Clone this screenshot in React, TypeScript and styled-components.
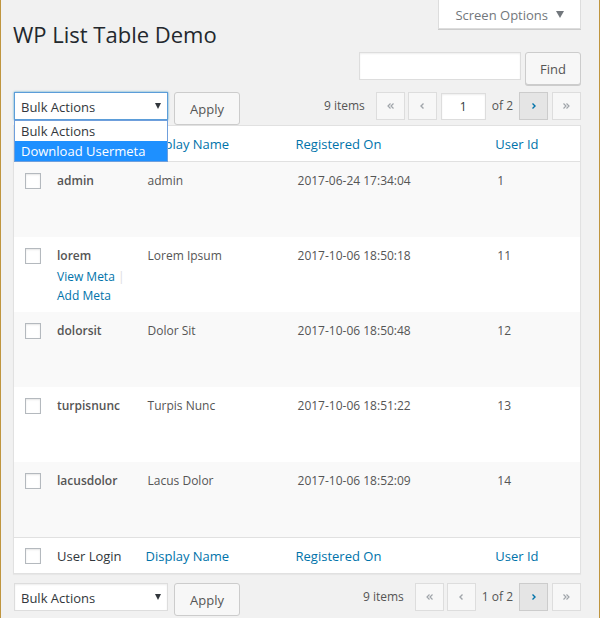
import React, { useState } from "react";
import styled, { createGlobalStyle, css } from "styled-components";

const GlobalStyle = createGlobalStyle`
  *, *::before, *::after { box-sizing: border-box; }
  body {
    margin: 0;
    background: #f1f1f1;
    color: #444;
    font-family: "Segoe UI", "Open Sans", "Noto Sans", sans-serif;
    font-size: 13px;
    line-height: 18px;
  }
  button, input, select { font: inherit; color: inherit; margin: 0; }
`;

const Page = styled.div`
  min-height: 100vh;
  padding: 0 18px 2px 12px;
  border: solid #bf953f;
  border-width: 0 1px;
`;

const Header = styled.header`
  display: flex;
  justify-content: space-between;
  align-items: flex-start;
  height: 52px;
`;

const Title = styled.h1`
  margin: 0;
  padding-top: 19px;
  font-size: 22px;
  font-weight: 400;
  line-height: 30px;
  color: #23282d;
`;

const ScreenOptions = styled.button`
  display: flex;
  align-items: center;
  gap: 8px;
  height: 29px;
  padding: 1px 16px 0;
  border: 1px solid #ddd;
  border-top: 0;
  background: #fff;
  box-shadow: 0 1px 0 #ccc;
  color: #72777c;
  white-space: nowrap;
`;

const SearchForm = styled.form`
  display: flex;
  justify-content: flex-end;
  align-items: flex-start;
  gap: 4px;
  margin-bottom: 7px;
`;

const fieldStyle = css`
  border: 1px solid #ddd;
  border-radius: 0;
  background: #fff;
  box-shadow: inset 0 1px 2px rgba(0, 0, 0, 0.07);
  color: #32373c;
  outline: 0;
`;

const SearchInput = styled.input`
  ${fieldStyle}
  width: 162px;
  height: 28px;
  padding: 3px 5px;
`;

const Button = styled.button`
  height: 33px;
  padding: 1px 14px 0;
  border: 1px solid #ccc;
  border-radius: 3px;
  background: #f7f7f7;
  box-shadow: 0 1px 0 #ccc;
  color: #555;
`;

const FlatButton = styled(Button)`
  padding: 1px 15px 0;
  box-shadow: none;
`;

const TableNav = styled.div<{ $below?: boolean }>`
  display: flex;
  justify-content: space-between;
  align-items: flex-start;
  margin-top: ${(p) => (p.$below ? 9 : 0)}px;
  padding-left: 1px;
`;

const BulkActions = styled.div`
  display: flex;
  align-items: flex-start;
  gap: 6px;
`;

const SelectBox = styled.div`
  position: relative;
  width: 154px;
`;

const Select = styled.select<{ $open?: boolean }>`
  ${fieldStyle}
  display: block;
  appearance: none;
  width: 100%;
  height: 28px;
  padding: 2px 20px 0 6px;
  ${(p) =>
    p.$open &&
    css`
      border-color: #5b9dd9;
      box-shadow: 0 0 2px rgba(30, 140, 190, 0.8);
    `}
`;

const SelectArrow = styled.svg`
  position: absolute;
  top: 11px;
  right: 7px;
  pointer-events: none;
`;

const OptionList = styled.ul`
  position: absolute;
  top: 28px;
  left: 0;
  right: 0;
  z-index: 1;
  margin: 0;
  padding: 0;
  border: 1px solid #6f9fdc;
  background: #fff;
  list-style: none;
`;

const OptionItem = styled.li<{ $active?: boolean }>`
  padding: 0 6px;
  line-height: 20px;
  white-space: nowrap;
  background: ${(p) => (p.$active ? "#1e90ff" : "#fff")};
  color: ${(p) => (p.$active ? "#fff" : "#32373c")};
`;

const Pagination = styled.nav`
  display: flex;
  align-items: center;
  gap: 4px;
  height: 28px;
  color: #555;
  font-size: 12px;
  white-space: nowrap;
`;

const ItemCount = styled.span`
  margin-right: 7px;
`;

const PageStatus = styled.span`
  padding: 0 2px;
`;

const PageInput = styled.input`
  ${fieldStyle}
  width: 45px;
  height: 27px;
  padding: 0;
  text-align: center;
`;

const PageButton = styled.button`
  display: flex;
  align-items: center;
  justify-content: center;
  width: 29px;
  height: 28px;
  padding: 0;
  border: 1px solid #ccc;
  background: #e5e5e5;
  color: #0073aa;
  &:disabled {
    border-color: #ddd;
    background: #f7f7f7;
    color: #a0a5aa;
  }
`;

const PageGroup = styled.div`
  display: flex;
  gap: 3px;
`;

const Table = styled.table`
  width: 100%;
  table-layout: fixed;
  border: 1px solid #e1e1e1;
  border-spacing: 0;
  background: #fff;
  box-shadow: 0 1px 1px rgba(0, 0, 0, 0.04);
`;

const Col = styled.col<{ $w?: string }>`
  width: ${(p) => p.$w ?? "auto"};
`;

const HeadCell = styled.th<{ $foot?: boolean }>`
  height: 36px;
  padding: 0 8px;
  border: solid #e1e1e1;
  border-width: ${(p) => (p.$foot ? "1px 0 0" : "0 0 1px")};
  color: #32373c;
  font-size: 13px;
  font-weight: 400;
  text-align: left;
  white-space: nowrap;
`;

const LoginHead = styled(HeadCell)`
  padding-left: 10px;
`;

const CheckHead = styled(HeadCell)`
  padding: 0 0 0 11px;
`;

const Row = styled.tr`
  height: 75px;
  &:nth-child(odd) {
    background: #f9f9f9;
  }
`;

const Cell = styled.td`
  padding: 10px 0 0 10px;
  vertical-align: top;
  color: #555;
  font-size: 12px;
`;

const CheckCell = styled.td`
  padding: 11px 0 0 11px;
  vertical-align: top;
`;

const Checkbox = styled.input`
  appearance: none;
  display: block;
  width: 16px;
  height: 16px;
  border: 1px solid #b4b9be;
  background: #fff;
  box-shadow: inset 0 1px 2px rgba(0, 0, 0, 0.1);
  &:checked {
    background: #0073aa;
  }
`;

const Login = styled.strong`
  display: block;
  font-weight: 600;
`;

const RowActions = styled.div`
  padding-top: 2px;
  font-size: 12px;
  line-height: 19px;
  color: #ddd;
`;

const Link = styled.a`
  color: #0073aa;
  text-decoration: none;
`;

const Chevron = ({ left, double }: { left?: boolean; double?: boolean }) => {
  const one = left ? "M3.500 .5 1 3l2.500 2.500" : "M.5 .5 3 3 .5 5.500";
  return (
    <svg
      width={double ? 7 : 4}
      height="6"
      viewBox={double ? "0 0 7 6" : "0 0 4 6"}
      fill="none"
      stroke="currentColor"
      strokeWidth={double ? 1.2 : 1.4}
      aria-hidden="true"
    >
      <path d={one} />
      {double && <path d={one} transform="translate(3 0)" />}
    </svg>
  );
};

const users = [
  { login: "admin", name: "admin", date: "2017-06-24 17:34:04", id: 1 },
  { login: "lorem", name: "Lorem Ipsum", date: "2017-10-06 18:50:18", id: 11, actions: true },
  { login: "dolorsit", name: "Dolor Sit", date: "2017-10-06 18:50:48", id: 12 },
  { login: "turpisnunc", name: "Turpis Nunc", date: "2017-10-06 18:51:22", id: 13 },
  { login: "lacusdolor", name: "Lacus Dolor", date: "2017-10-06 18:52:09", id: 14 },
];

const bulkOptions = ["Bulk Actions", "Download Usermeta"];

function Nav({ below }: { below?: boolean }) {
  const [action, setAction] = useState(bulkOptions[0]);
  const [open, setOpen] = useState(!below);
  const [page, setPage] = useState("1");
  const choose = (value: string) => {
    setAction(value);
    setOpen(false);
  };
  return (
    <TableNav $below={below}>
      <BulkActions>
        <SelectBox>
          <Select
            aria-label="Select bulk action"
            $open={open}
            value={action}
            onChange={(e) => choose(e.target.value)}
          >
            {bulkOptions.map((o) => (
              <option key={o}>{o}</option>
            ))}
          </Select>
          <SelectArrow width="6" height="6" viewBox="0 0 6 6" aria-hidden="true">
            <path d="M0 0h6L3 6z" fill="#32373c" />
          </SelectArrow>
          {open && (
            <OptionList role="listbox" aria-label="Bulk actions">
              {bulkOptions.map((o, i) => (
                <OptionItem key={o} role="option" aria-selected={i === 1} $active={i === 1} onClick={() => choose(o)}>
                  {o}
                </OptionItem>
              ))}
            </OptionList>
          )}
        </SelectBox>
        <FlatButton type="button">Apply</FlatButton>
      </BulkActions>
      <Pagination aria-label="Table pages">
        <ItemCount>9 items</ItemCount>
        <PageGroup>
          <PageButton disabled aria-label="First page"><Chevron left double /></PageButton>
          <PageButton disabled aria-label="Previous page"><Chevron left /></PageButton>
        </PageGroup>
        {!below && (
          <PageInput aria-label="Current page" value={page} onChange={(e) => setPage(e.target.value)} />
        )}
        <PageStatus>{below ? "1 of 2" : "of 2"}</PageStatus>
        <PageButton aria-label="Next page"><Chevron /></PageButton>
        <PageButton disabled aria-label="Last page"><Chevron double /></PageButton>
      </Pagination>
    </TableNav>
  );
}

function HeadRow({ foot }: { foot?: boolean }) {
  return (
    <tr>
      <CheckHead $foot={foot}>
        <Checkbox type="checkbox" aria-label="Select all" />
      </CheckHead>
      <LoginHead $foot={foot}>User Login</LoginHead>
      {["Display Name", "Registered On", "User Id"].map((label) => (
        <HeadCell key={label} $foot={foot}>
          <Link href="#">{label}</Link>
        </HeadCell>
      ))}
    </tr>
  );
}

export default function App() {
  return (
    <>
      <GlobalStyle />
      <Page>
        <Header>
          <Title>WP List Table Demo</Title>
          <ScreenOptions type="button">
            Screen Options
            <svg width="8" height="7" viewBox="0 0 8 7" aria-hidden="true">
              <path d="M0 0h8L4 7z" fill="currentColor" />
            </svg>
          </ScreenOptions>
        </Header>
        <SearchForm onSubmit={(e) => e.preventDefault()}>
          <SearchInput type="search" aria-label="Search users" />
          <Button type="submit">Find</Button>
        </SearchForm>
        <Nav />
        <Table>
          <colgroup>
            <Col $w="33px" />
            <Col $w="16%" />
            <Col $w="26.5%" />
            <Col $w="35.3%" />
            <Col />
          </colgroup>
          <thead>
            <HeadRow />
          </thead>
          <tbody>
            {users.map((u) => (
              <Row key={u.login}>
                <CheckCell>
                  <Checkbox type="checkbox" aria-label={`Select ${u.login}`} />
                </CheckCell>
                <Cell>
                  <Login>{u.login}</Login>
                  {u.actions && (
                    <RowActions>
                      <Link href="#">View Meta</Link> |<br />
                      <Link href="#">Add Meta</Link>
                    </RowActions>
                  )}
                </Cell>
                <Cell>{u.name}</Cell>
                <Cell>{u.date}</Cell>
                <Cell>{u.id}</Cell>
              </Row>
            ))}
          </tbody>
          <tfoot>
            <HeadRow foot />
          </tfoot>
        </Table>
        <Nav below />
      </Page>
    </>
  );
}
